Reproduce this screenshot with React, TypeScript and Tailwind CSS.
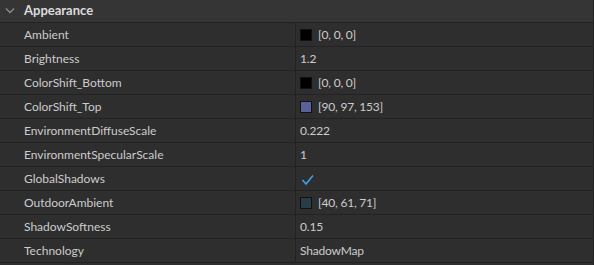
type Prop = {
  name: string;
  value: string;
  color?: string;
  check?: boolean;
};

const props: Prop[] = [
  { name: "Ambient", value: "[0, 0, 0]", color: "#000000" },
  { name: "Brightness", value: "1.2" },
  { name: "ColorShift_Bottom", value: "[0, 0, 0]", color: "#000000" },
  { name: "ColorShift_Top", value: "[90, 97, 153]", color: "#5a6199" },
  { name: "EnvironmentDiffuseScale", value: "0.222" },
  { name: "EnvironmentSpecularScale", value: "1" },
  { name: "GlobalShadows", value: "", check: true },
  { name: "OutdoorAmbient", value: "[40, 61, 71]", color: "#283d47" },
  { name: "ShadowSoftness", value: "0.15" },
  { name: "Technology", value: "ShadowMap" },
];

export default function App() {
  return (
    <div
      className="w-[594px] h-[265px] overflow-hidden bg-[#2e2e2e] text-[12px] text-[#cccccc] border-r border-[#222222]"
      style={{ fontFamily: "Lato, 'Liberation Sans', sans-serif" }}
    >
      <div className="flex h-[23px] items-center bg-[#353535] border-b border-[#222222]">
        <svg width="24" height="22" viewBox="0 0 24 22" className="shrink-0">
          <path d="M6 8.5 L10 12.5 L14 8.5" fill="none" stroke="#8a8a8a" strokeWidth="1.4" />
        </svg>
        <span className="font-bold text-[13px] text-[#dcdcdc]">Appearance</span>
      </div>
      {props.map((p) => (
        <div key={p.name} className="flex h-[24px] border-b border-[#222222]">
          <div className="w-[296px] shrink-0 flex items-center pl-6 border-r border-[#222222]">
            {p.name}
          </div>
          <div className="flex-1 flex items-center pl-[4px]">
            {p.color && (
              <span
                className="w-[12px] h-[12px] border border-[#111111] mr-[6px]"
                style={{ backgroundColor: p.color }}
              />
            )}
            {p.check ? (
              <svg width="14" height="14" viewBox="0 0 14 14" className="ml-[1px] mt-[3px]">
                <path d="M1.5 7 L5 11 L12 2.5" fill="none" stroke="#3ea0ec" strokeWidth="1.6" />
              </svg>
            ) : (
              <span className="tracking-[-0.2px]">{p.value}</span>
            )}
          </div>
        </div>
      ))}
    </div>
  );
}
